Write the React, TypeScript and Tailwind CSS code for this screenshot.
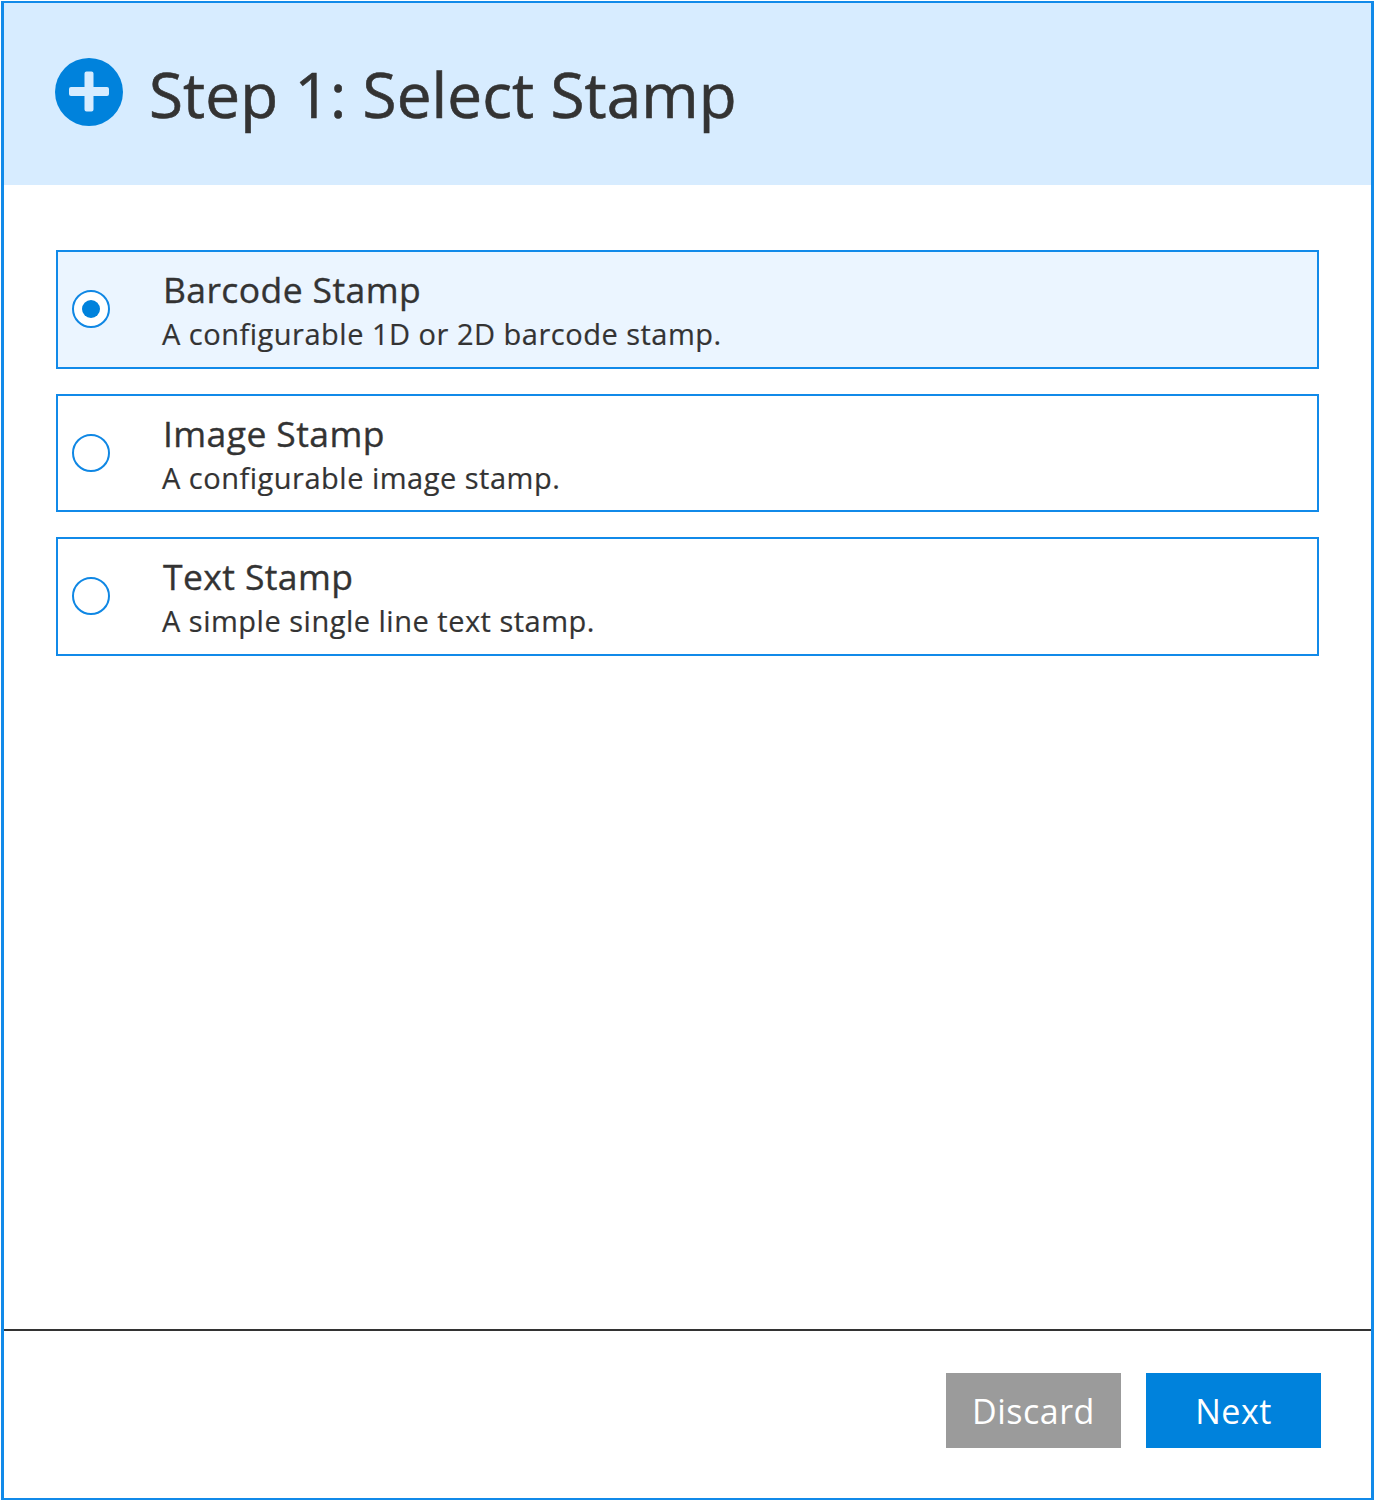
const font = { fontFamily: '"Open Sans", sans-serif' };

function Option({ title, desc, selected }: { title: string; desc: string; selected?: boolean }) {
  return (
    <div className={`flex h-[118.5px] items-center border-2 border-[#118ae9] pl-[14px] ${selected ? "bg-[#ebf5ff]" : "bg-white"}`}>
      <span className="flex h-[38px] w-[38px] shrink-0 items-center justify-center rounded-full border-2 border-[#0f87e4] bg-white">
        {selected && <span className="h-[18px] w-[18px] rounded-full bg-[#0082dc]" />}
      </span>
      <div className="ml-[53px] flex flex-col pt-[2px] text-[#333333]">
        <div className="text-[35.5px] leading-[46px] tracking-[0.4px] [-webkit-text-stroke:0.35px_#333333]">{title}</div>
        <div className="-ml-px mt-[2px] text-[29px] leading-[40px] tracking-[0.5px] [-webkit-text-stroke:0.2px_#333333]">{desc}</div>
      </div>
    </div>
  );
}

export default function App() {
  return (
    <div style={font} className="flex h-[1500px] w-[1375px] flex-col bg-white pt-px pl-px pr-px">
      <div className="flex h-full w-full flex-col border-t-2 border-r-[3px] border-b-2 border-l-[3px] border-[#118ae9]">
        <div className="flex h-[182px] shrink-0 items-center bg-[#d7ecff] pl-[51px]">
          <svg width="68" height="68" viewBox="0 0 68 68" className="mb-[4px] shrink-0">
            <circle cx="34" cy="34" r="34" fill="#0082dc" />
            <path d="M29.5 15.5a2 2 0 0 1 2-2h5a2 2 0 0 1 2 2V29h13.5a2 2 0 0 1 2 2v5a2 2 0 0 1-2 2H38.5v13.5a2 2 0 0 1-2 2h-5a2 2 0 0 1-2-2V38H16a2 2 0 0 1-2-2v-5a2 2 0 0 1 2-2h13.5z" fill="#d7ecff" />
          </svg>
          <h1 className="ml-[26px] text-[62px] leading-[82px] tracking-[0.1px] text-[#333333] [-webkit-text-stroke:0.6px_#333333]">Step 1: Select Stamp</h1>
        </div>
        <div className="flex flex-1 flex-col gap-[25px] px-[52px] pt-[65px]">
          <Option selected title="Barcode Stamp" desc="A configurable 1D or 2D barcode stamp." />
          <Option title="Image Stamp" desc="A configurable image stamp." />
          <Option title="Text Stamp" desc="A simple single line text stamp." />
        </div>
        <div className="flex h-[169px] shrink-0 items-start justify-end gap-[25px] border-t-2 border-[#333333] pr-[50px] pt-[42px]">
          <button className="h-[75px] w-[175px] bg-[#9b9b9b] pt-[2px] text-[34px] tracking-[0.5px] text-white">Discard</button>
          <button className="h-[75px] w-[175px] bg-[#0082dc] pt-[2px] text-[34px] tracking-[0.5px] text-white">Next</button>
        </div>
      </div>
    </div>
  );
}
